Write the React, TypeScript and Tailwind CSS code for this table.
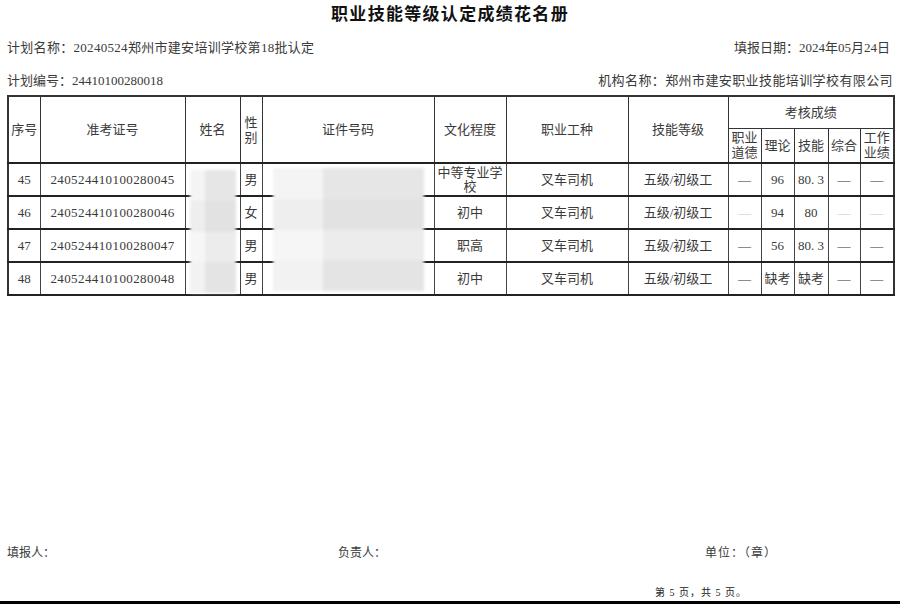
import React from "react";

const serif = "font-['Liberation_Serif','Noto_Sans_CJK_SC',serif]";

const rows = [
  { no: "45", ticket: "240524410100280045", sex: "男", edu: "中等专业学校", job: "叉车司机", level: "五级/初级工", theory: "96", skill: "80.3", faint: false },
  { no: "46", ticket: "240524410100280046", sex: "女", edu: "初中", job: "叉车司机", level: "五级/初级工", theory: "94", skill: "80", faint: true },
  { no: "47", ticket: "240524410100280047", sex: "男", edu: "职高", job: "叉车司机", level: "五级/初级工", theory: "56", skill: "80.3", faint: false },
  { no: "48", ticket: "240524410100280048", sex: "男", edu: "初中", job: "叉车司机", level: "五级/初级工", theory: "缺考", skill: "缺考", faint: false },
];

const widths = [32, 145, 55, 22, 172, 72, 122, 100, 33, 33, 34, 32, 34];

function Blur({ className }: { className: string }) {
  // privacy mosaic laid over the name / id columns
  return (
    <div className={`absolute ${className} bg-[#f1f1f1] blur-[1.5px] flex flex-col`}>
      <div className="flex h-1/4">
        <div className="w-1/3 bg-[#f4f4f4]" />
        <div className="flex-1 bg-[#e6e6e6]" />
      </div>
      <div className="flex h-1/4">
        <div className="w-1/3 bg-[#eeeeee]" />
        <div className="flex-1 bg-[#e2e2e2]" />
      </div>
      <div className="flex h-1/4">
        <div className="w-1/3 bg-[#f6f6f6]" />
        <div className="flex-1 bg-[#ececec]" />
      </div>
      <div className="flex h-1/4">
        <div className="w-1/3 bg-[#f2f2f2]" />
        <div className="flex-1 bg-[#e4e4e4]" />
      </div>
    </div>
  );
}

export default function App() {
  const th = "border border-[#333] font-normal text-[13px] leading-[15px] text-[#3a3a3a] p-0 text-center";
  const td = "border-x border-x-[#444] border-b-2 border-b-[#222] text-[13px] leading-[14px] text-[#3a3a3a] p-0 text-center h-[33px]";

  return (
    <div className={`relative w-[900px] h-[604px] bg-white flex flex-col ${serif}`}>
      <div className="px-[7px] flex flex-col">
        {/* Title */}
        <div className="h-[26px] flex items-center justify-center text-[17px] font-bold text-[#111] font-['Noto_Sans_CJK_SC',sans-serif] tracking-[1.3px]">
          职业技能等级认定成绩花名册
        </div>

        <div className="mt-[12px] h-[20px] flex items-center justify-between text-[13px] text-[#3a3a3a]">
          <span className="tracking-[0.3px]">计划名称：20240524郑州市建安培训学校第18批认定</span>
          <span className="pr-[3px]">填报日期：2024年05月24日</span>
        </div>

        <div className="mt-[13px] h-[20px] flex items-center justify-between text-[13px] text-[#3a3a3a]">
          <span>计划编号：24410100280018</span>
          <span className="tracking-[0.4px]">机构名称：郑州市建安职业技能培训学校有限公司</span>
        </div>

        <table className="mt-[4px] table-fixed border-collapse border-2 border-[#333] w-[886px]">
          <colgroup>
            {widths.map((w, i) => (
              <col key={i} style={{ width: w }} />
            ))}
          </colgroup>
          <thead>
            <tr className="h-[32px]">
              <th rowSpan={2} className={th}>序号</th>
              <th rowSpan={2} className={th}>准考证号</th>
              <th rowSpan={2} className={th}>姓名</th>
              <th rowSpan={2} className={`${th} border-l-[#888]`}>性<br />别</th>
              <th rowSpan={2} className={th}>证件号码</th>
              <th rowSpan={2} className={th}>文化程度</th>
              <th rowSpan={2} className={`${th} border-l-[#999]`}>职业工种</th>
              <th rowSpan={2} className={th}>技能等级</th>
              <th colSpan={5} className={th}>考核成绩</th>
            </tr>
            <tr className="h-[35px]">
              <th className={`${th} leading-[14px]`}>职业<br />道德</th>
              <th className={th}>理论</th>
              <th className={th}>技能</th>
              <th className={th}>综合</th>
              <th className={`${th} leading-[14px]`}>工作<br />业绩</th>
            </tr>
          </thead>
          <tbody>
            {rows.map((r) => {
              const dash = r.faint ? "text-[#c8c8c8]" : "text-[#333]";
              return (
                <tr key={r.no} className="border-t-2 border-[#222]">
                  <td className={td}>{r.no}</td>
                  <td className={`${td} tracking-[0.4px]`}>{r.ticket}</td>
                  <td className={td}></td>
                  <td className={`${td} border-l-[#888]`}>{r.sex}</td>
                  <td className={td}></td>
                  <td className={`${td} leading-[13px]`}>{r.edu}</td>
                  <td className={`${td} border-l-[#999]`}>{r.job}</td>
                  <td className={td}>{r.level}</td>
                  <td className={`${td} ${dash}`}>—</td>
                  <td className={td}>{r.theory}</td>
                  <td className={td}>{r.skill === "80.3" ? "80. 3" : r.skill}</td>
                  <td className={`${td} ${dash}`}>—</td>
                  <td className={`${td} ${dash}`}>—</td>
                </tr>
              );
            })}
          </tbody>
        </table>
      </div>

      <Blur className="left-[190px] top-[170px] w-[46px] h-[123px]" />
      <Blur className="left-[273px] top-[168px] w-[151px] h-[123px]" />

      <div className="flex-1" />

      {/* Signatures */}
      <div className="px-[7px] h-[20px] mb-[-2px] flex items-center text-[12px] text-[#3a3a3a]">
        <span className="w-[331px]">填报人：</span>
        <span className="w-[367px]">负责人：</span>
        <span className="tracking-[1px]">单位：（章）</span>
      </div>

      <div className="mt-[24px] h-[14px] flex items-center pl-[655px] text-[10px] text-[#222] tracking-[1px]">
        第 5 页，共 5 页。
      </div>

      <div className="mt-[2px] h-[3px] bg-black" />
    </div>
  );
}
